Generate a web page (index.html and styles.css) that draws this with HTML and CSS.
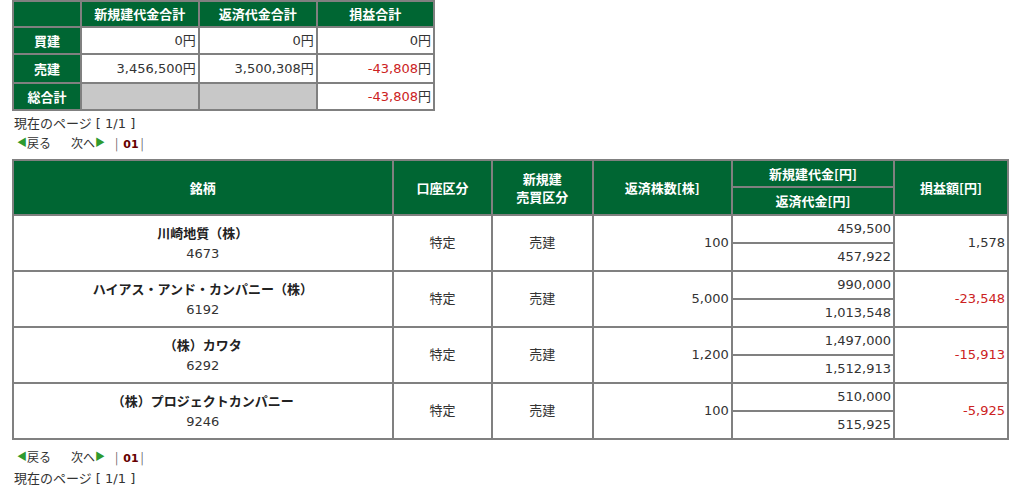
FILE: index.html
```html
<!DOCTYPE html>
<html lang="ja">
<head>
<meta charset="utf-8">
<link rel="stylesheet" href="styles.css">
</head>
<body>
<table class="sum">
  <tr class="hrow">
    <th class="c1"></th><th class="c2">新規建代金合計</th><th class="c2">返済代金合計</th><th class="c2">損益合計</th>
  </tr>
  <tr>
    <th>買建</th><td>0円</td><td>0円</td><td>0円</td>
  </tr>
  <tr class="tall">
    <th>売建</th><td>3,456,500円</td><td>3,500,308円</td><td><span class="neg">-43,808</span>円</td>
  </tr>
  <tr>
    <th>総合計</th><td class="gray"></td><td class="gray"></td><td><span class="neg">-43,808</span>円</td>
  </tr>
</table>
<div class="page">現在のページ [ 1/1 ]</div>
<div class="pager"><span class="tri">◀</span>戻る<span class="next">次へ</span><span class="tri">▶</span><span class="bar">|</span><b class="num">01</b><span class="bar2">|</span></div>

<table class="main">
  <tr class="h1">
    <th rowspan="2" class="w1">銘柄</th>
    <th rowspan="2" class="w2">口座区分</th>
    <th rowspan="2" class="w3">新規建<br>売買区分</th>
    <th rowspan="2" class="w4">返済株数[株]</th>
    <th class="w5">新規建代金[円]</th>
    <th rowspan="2" class="w6">損益額[円]</th>
  </tr>
  <tr class="h2"><th>返済代金[円]</th></tr>

  <tr class="r1">
    <td rowspan="2" class="name"><b>川崎地質（株）</b><br>4673</td>
    <td rowspan="2" class="ctr">特定</td>
    <td rowspan="2" class="ctr">売建</td>
    <td rowspan="2" class="rt">100</td>
    <td class="rt">459,500</td>
    <td rowspan="2" class="rt">1,578</td>
  </tr>
  <tr class="r2"><td class="rt">457,922</td></tr>

  <tr class="r1">
    <td rowspan="2" class="name"><b>ハイアス・アンド・カンパニー（株）</b><br>6192</td>
    <td rowspan="2" class="ctr">特定</td>
    <td rowspan="2" class="ctr">売建</td>
    <td rowspan="2" class="rt">5,000</td>
    <td class="rt">990,000</td>
    <td rowspan="2" class="rt neg">-23,548</td>
  </tr>
  <tr class="r2"><td class="rt">1,013,548</td></tr>

  <tr class="r1">
    <td rowspan="2" class="name"><b>（株）カワタ</b><br>6292</td>
    <td rowspan="2" class="ctr">特定</td>
    <td rowspan="2" class="ctr">売建</td>
    <td rowspan="2" class="rt">1,200</td>
    <td class="rt">1,497,000</td>
    <td rowspan="2" class="rt neg">-15,913</td>
  </tr>
  <tr class="r2"><td class="rt">1,512,913</td></tr>

  <tr class="r1">
    <td rowspan="2" class="name"><b>（株）プロジェクトカンパニー</b><br>9246</td>
    <td rowspan="2" class="ctr">特定</td>
    <td rowspan="2" class="ctr">売建</td>
    <td rowspan="2" class="rt">100</td>
    <td class="rt">510,000</td>
    <td rowspan="2" class="rt neg">-5,925</td>
  </tr>
  <tr class="r2"><td class="rt">515,925</td></tr>
</table>

<div class="pager pager-b"><span class="tri">◀</span>戻る<span class="next">次へ</span><span class="tri">▶</span><span class="bar">|</span><b class="num">01</b><span class="bar2">|</span></div>
<div class="page page-b">現在のページ [ 1/1 ]</div>
</body>
</html>
```

FILE: styles.css
```css
html, body {
  margin: 0;
  padding: 0;
  background: #fff;
}
body {
  padding: 0 12px;
  font-family: "DejaVu Sans", "Noto Sans CJK JP", sans-serif;
  font-size: 13px;
  color: #333;
}
table {
  border-collapse: collapse;
}
th, td {
  border: 2px solid #808080;
  padding: 0 2px;
  line-height: 18px;
}
th {
  background: #006633;
  color: #fff;
  font-weight: bold;
  text-align: center;
  font-family: "Noto Sans CJK JP", sans-serif;
}
.neg { color: #cc2222; }

/* summary table */
.sum { width: 423px; }
.sum .c1 { width: 64px; }
.sum .c2 { width: 114px; }
.sum tr { height: 27px; }
.sum .hrow { height: 26px; }
.sum .tall { height: 29px; }
.sum td { text-align: right; background: #fff; }
.sum td.gray { background: #c8c8c8; }

.page {
  margin-top: 4px;
  line-height: 18px;
  padding-left: 2px;
}
.pager {
  font-size: 12px;
  line-height: 16px;
  height: 16px;
  margin-top: 2px;
  padding-left: 5px;
  color: #333;
  font-family: "Noto Sans CJK JP", sans-serif;
}
.tri { color: #2e9a2e; font-size: 10px; position: relative; top: -2px; }
.next { margin-left: 20px; }
.bar { margin-left: 10px; margin-right: 5px; color: #666; font-size: 12px; }
.bar2 { margin-left: 2px; color: #666; font-size: 12px; }
.num { color: #660000; font-size: 11px; font-family: "DejaVu Sans", sans-serif; }

/* main table */
.main {
  width: 997px;
  margin-top: 8px;
}
.main .w1 { width: 380px; }
.main .w2 { width: 95px; }
.main .w3 { width: 96px; }
.main .w4 { width: 135px; }
.main .w5 { width: 158px; }
.main .w6 { width: 109px; }
.main .h1 { height: 27px; }
.main .h2 { height: 28px; }
.main .r1, .main .r2 { height: 28px; }
.main td { background: #fff; }
.main .name { text-align: center; line-height: 20px; }
.main .name b { color: #222; font-family: "Noto Sans CJK JP", sans-serif; }
.main .ctr { text-align: center; }
.main .rt { text-align: right; }

.pager-b { margin-top: 9px; }
.page-b { margin-top: 5px; }
```
